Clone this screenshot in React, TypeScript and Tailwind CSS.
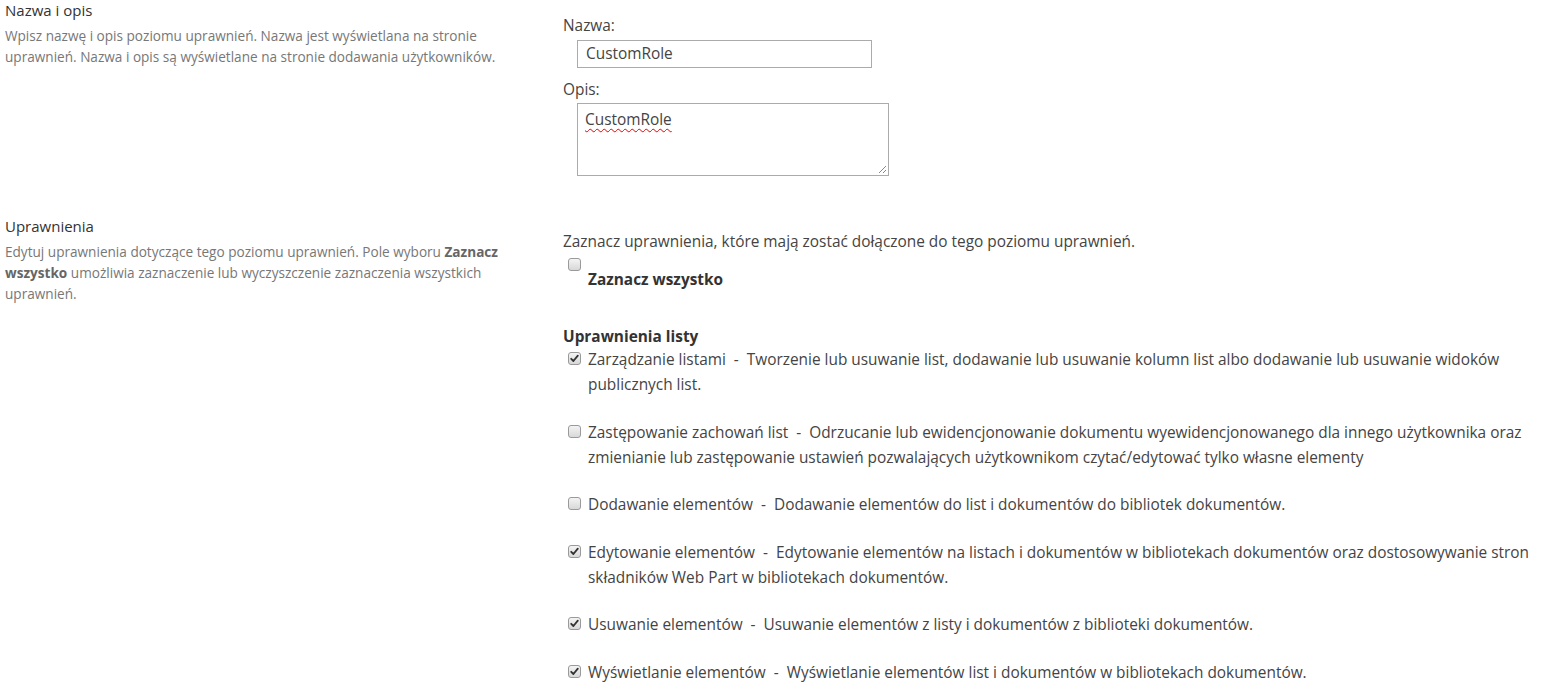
import React from 'react'

const FONT = { fontFamily: '"Open Sans", "Noto Sans", sans-serif' }

type Perm = { name: string; desc: string; checked: boolean }

const PERMS: Perm[] = [
  {
    name: 'Zarządzanie listami',
    desc: 'Tworzenie lub usuwanie list, dodawanie lub usuwanie kolumn list albo dodawanie lub usuwanie widoków publicznych list.',
    checked: true,
  },
  {
    name: 'Zastępowanie zachowań list',
    desc: 'Odrzucanie lub ewidencjonowanie dokumentu wyewidencjonowanego dla innego użytkownika oraz zmienianie lub zastępowanie ustawień pozwalających użytkownikom czytać/edytować tylko własne elementy',
    checked: false,
  },
  {
    name: 'Dodawanie elementów',
    desc: 'Dodawanie elementów do list i dokumentów do bibliotek dokumentów.',
    checked: false,
  },
  {
    name: 'Edytowanie elementów',
    desc: 'Edytowanie elementów na listach i dokumentów w bibliotekach dokumentów oraz dostosowywanie stron składników Web Part w bibliotekach dokumentów.',
    checked: true,
  },
  {
    name: 'Usuwanie elementów',
    desc: 'Usuwanie elementów z listy i dokumentów z biblioteki dokumentów.',
    checked: true,
  },
  {
    name: 'Wyświetlanie elementów',
    desc: 'Wyświetlanie elementów list i dokumentów w bibliotekach dokumentów.',
    checked: true,
  },
]

function Box({ checked }: { checked: boolean }) {
  return (
    <span className="inline-flex h-[13px] w-[13px] shrink-0 items-center justify-center rounded-[3px] border border-[#9a9a9a] bg-gradient-to-b from-[#f4f4f4] to-[#d8d8d8]">
      {checked && (
        <svg width="9" height="9" viewBox="0 0 9 9">
          <path d="M1.2 4.8 L3.4 7 L7.8 1.6" fill="none" stroke="#333" strokeWidth="1.8" strokeLinecap="round" strokeLinejoin="round" />
        </svg>
      )}
    </span>
  )
}

function Section({
  title,
  desc,
  children,
}: {
  title: string
  desc: React.ReactNode
  children: React.ReactNode
}) {
  return (
    <div className="flex">
      <div className="w-[563px] shrink-0 pl-[5px] pr-[50px]">
        <h3 className="text-[15px] leading-[20px] text-[#333]">{title}</h3>
        <p className="mt-[5px] text-[13.6px] leading-[21px] text-[#777]">{desc}</p>
      </div>
      <div className="flex-1 pr-[10px]">{children}</div>
    </div>
  )
}

export default function App() {
  return (
    <div className="min-h-[694px] bg-white" style={FONT}>
      <Section
        title="Nazwa i opis"
        desc="Wpisz nazwę i opis poziomu uprawnień. Nazwa jest wyświetlana na stronie uprawnień. Nazwa i opis są wyświetlane na stronie dodawania użytkowników."
      >
        <div className="pt-[16px] text-[15.4px] text-[#444]">
          <div className="leading-[20px]">Nazwa:</div>
          <div className="ml-[14px] mt-[4px] flex h-[28px] w-[295px] items-center border border-[#ababab] px-[8px]">
            CustomRole
          </div>
          <div className="mt-[12px] leading-[20px]">Opis:</div>
          <div className="relative ml-[14px] mt-[3px] h-[73px] w-[312px] border border-[#ababab] px-[7px] pt-[4px]">
            <span className="underline decoration-wavy decoration-[#e00] decoration-1 underline-offset-[3px]">
              CustomRole
            </span>
            <svg className="absolute bottom-[1px] right-[1px]" width="10" height="10" viewBox="0 0 10 10">
              <path d="M9 2 L2 9 M9 6 L6 9" stroke="#888" strokeWidth="1" />
            </svg>
          </div>
        </div>
      </Section>

      <div className="mt-[40px]">
        <Section
          title="Uprawnienia"
          desc={
            <>
              Edytuj uprawnienia dotyczące tego poziomu uprawnień. Pole wyboru{' '}
              <b className="font-bold text-[#666]">Zaznacz wszystko</b> umożliwia zaznaczenie lub wyczyszczenie
              zaznaczenia wszystkich uprawnień.
            </>
          }
        >
          <div className="pt-[16px] text-[15.4px] text-[#444]">
            <div className="leading-[20px]">
              Zaznacz uprawnienia, które mają zostać dołączone do tego poziomu uprawnień.
            </div>
            <div className="ml-[5px] mt-[6px] flex">
              <Box checked={false} />
            </div>
            <div className="ml-[25px] mt-[-1px] font-bold leading-[20px] text-[#333]">Zaznacz wszystko</div>
            <div className="mt-[37px] font-bold leading-[20px] text-[#333]">Uprawnienia listy</div>
            <div>
              {PERMS.map((p) => (
                <div key={p.name} className="mb-[22.5px] flex">
                  <div className="flex w-[25px] shrink-0 pl-[5px] pt-[5px]">
                    <Box checked={p.checked} />
                  </div>
                  <div className="leading-[25px]">
                    {p.name}
                    {'\u00a0\u00a0-\u00a0\u00a0'}
                    {p.desc}
                  </div>
                </div>
              ))}
            </div>
          </div>
        </Section>
      </div>
    </div>
  )
}
